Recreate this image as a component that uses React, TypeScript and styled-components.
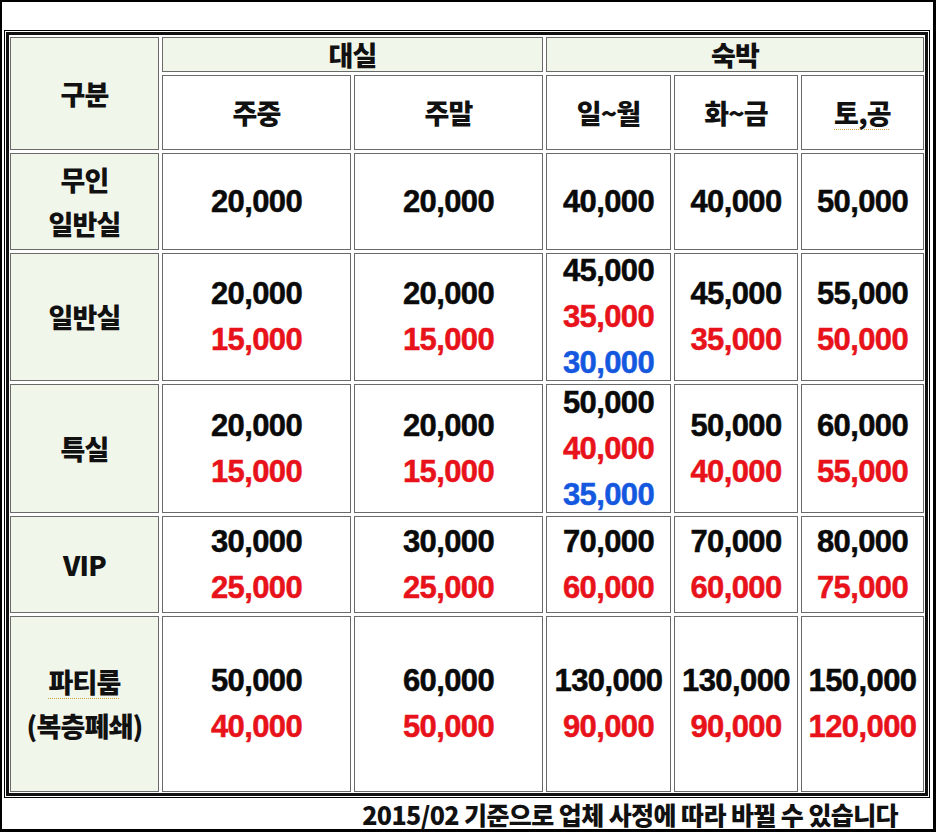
import React, { ReactElement } from 'react';
import styled, { createGlobalStyle } from 'styled-components';

type Tone = 'black' | 'red' | 'blue';

interface Price {
  value: string;
  tone: Tone;
}

interface RateRow {
  label: string[];
  height: number;
  cells: Price[][];
}

const TONES: Record<Tone, string> = {
  black: '#0a0a0a',
  red: '#e8121b',
  blue: '#1558e0',
};

const p = (value: string, tone: Tone = 'black'): Price => ({ value, tone });

const SUB_HEADERS = ['주중', '주말', '일~월', '화~금', '토,공'];

const ROWS: RateRow[] = [
  {
    label: ['무인', '일반실'],
    height: 97,
    cells: [[p('20,000')], [p('20,000')], [p('40,000')], [p('40,000')], [p('50,000')]],
  },
  {
    label: ['일반실'],
    height: 128,
    cells: [
      [p('20,000'), p('15,000', 'red')],
      [p('20,000'), p('15,000', 'red')],
      [p('45,000'), p('35,000', 'red'), p('30,000', 'blue')],
      [p('45,000'), p('35,000', 'red')],
      [p('55,000'), p('50,000', 'red')],
    ],
  },
  {
    label: ['특실'],
    height: 129,
    cells: [
      [p('20,000'), p('15,000', 'red')],
      [p('20,000'), p('15,000', 'red')],
      [p('50,000'), p('40,000', 'red'), p('35,000', 'blue')],
      [p('50,000'), p('40,000', 'red')],
      [p('60,000'), p('55,000', 'red')],
    ],
  },
  {
    label: ['VIP'],
    height: 97,
    cells: [
      [p('30,000'), p('25,000', 'red')],
      [p('30,000'), p('25,000', 'red')],
      [p('70,000'), p('60,000', 'red')],
      [p('70,000'), p('60,000', 'red')],
      [p('80,000'), p('75,000', 'red')],
    ],
  },
  {
    label: ['파티룸', '(복층폐쇄)'],
    height: 176,
    cells: [
      [p('50,000'), p('40,000', 'red')],
      [p('60,000'), p('50,000', 'red')],
      [p('130,000'), p('90,000', 'red')],
      [p('130,000'), p('90,000', 'red')],
      [p('150,000'), p('120,000', 'red')],
    ],
  },
];

// words the editor flagged with a dotted spellcheck line
const FLAGGED = ['토,공', '파티룸'];

const GlobalStyle = createGlobalStyle`
  html, body {
    margin: 0;
    padding: 0;
    background: #fff;
  }
  * {
    box-sizing: border-box;
  }
`;

function App(): ReactElement {
  const rowHeights = [35, 75, ...ROWS.map(({ height }) => height)];

  return (
    <>
      <GlobalStyle />
      <Frame>
        <TableOuter>
          <TableGrid style={{ gridTemplateRows: rowHeights.map((h) => `${h}px`).join(' ') }}>
            <Cell $shade $rowSpan={2}>
              <HeadText>구분</HeadText>
            </Cell>
            <Cell $shade $colSpan={2}>
              <HeadText>대실</HeadText>
            </Cell>
            <Cell $shade $colSpan={3}>
              <HeadText>숙박</HeadText>
            </Cell>
            {SUB_HEADERS.map((name) => (
              <Cell key={name}>
                <HeadText $flagged={FLAGGED.includes(name)}>{name}</HeadText>
              </Cell>
            ))}
            {ROWS.map(({ label, cells }) => (
              <React.Fragment key={label.join('')}>
                <Cell $shade>
                  {label.map((line) => (
                    <LabelLine key={line} $flagged={FLAGGED.includes(line)}>
                      {line}
                    </LabelLine>
                  ))}
                </Cell>
                {cells.map((prices, i) => (
                  <Cell key={`${label.join('')}_${i}`}>
                    {prices.map(({ value, tone }) => (
                      <PriceText key={`${value}_${tone}`} $tone={tone}>
                        {value}
                      </PriceText>
                    ))}
                  </Cell>
                ))}
              </React.Fragment>
            ))}
          </TableGrid>
        </TableOuter>
        <Footer>2015/02 기준으로 업체 사정에 따라 바뀔 수 있습니다</Footer>
      </Frame>
    </>
  );
}

const Frame = styled.div`
  width: 936px;
  height: 832px;
  border-style: solid;
  border-color: #000;
  border-width: 2px 3px 3px 2px;
  padding: 28px 0 0 2px;
  display: flex;
  flex-direction: column;
  background: #fff;
`;

const TableOuter = styled.div`
  width: 926px;
  border: 1px solid #000;
  padding: 1px;
  background: #fff;
`;

const TableGrid = styled.div`
  display: grid;
  grid-template-columns: 149px 189px 189px 125px 124px 123px;
  gap: 3px;
  border: 3px solid #111;
  padding: 2px 1px 1px 1px;
`;

const Cell = styled.div<{ $shade?: boolean; $colSpan?: number; $rowSpan?: number }>`
  grid-column: span ${({ $colSpan }) => $colSpan ?? 1};
  grid-row: span ${({ $rowSpan }) => $rowSpan ?? 1};
  min-height: 0;
  border: 1px solid #6a6a6a;
  background: ${({ $shade }) => ($shade ? '#f1f6eb' : '#fff')};
  display: flex;
  flex-direction: column;
  align-items: center;
  justify-content: center;
`;

const koreanFont = `'Noto Sans CJK KR', 'Liberation Sans', sans-serif`;

const HeadText = styled.span<{ $flagged?: boolean }>`
  font-family: ${koreanFont};
  font-weight: 900;
  font-size: 27px;
  line-height: 1;
  color: #111;
  letter-spacing: -0.8px;
  text-decoration: ${({ $flagged }) => ($flagged ? 'underline dotted #d6a33a' : 'none')};
  text-decoration-thickness: 1px;
  text-underline-offset: 5px;
`;

const LabelLine = styled.span<{ $flagged?: boolean }>`
  font-family: ${koreanFont};
  font-weight: 900;
  font-size: 27px;
  line-height: 44px;
  color: #111;
  letter-spacing: -0.8px;
  white-space: nowrap;
  text-decoration: ${({ $flagged }) => ($flagged ? 'underline dotted #d6a33a' : 'none')};
  text-decoration-thickness: 1px;
  text-underline-offset: 5px;
`;

const PriceText = styled.span<{ $tone: Tone }>`
  font-family: 'Liberation Sans', Arial, sans-serif;
  font-weight: 700;
  font-size: 31px;
  line-height: 46px;
  letter-spacing: -0.6px;
  white-space: nowrap;
  color: ${({ $tone }) => TONES[$tone]};
  -webkit-text-stroke: 0.5px currentColor;
`;

const Footer = styled.div`
  flex: 1;
  display: flex;
  align-items: center;
  justify-content: flex-end;
  padding-right: 35px;
  font-family: ${koreanFont};
  font-weight: 900;
  font-size: 25px;
  line-height: 26px;
  letter-spacing: -0.6px;
  color: #111;
  white-space: nowrap;
`;

export default App;
